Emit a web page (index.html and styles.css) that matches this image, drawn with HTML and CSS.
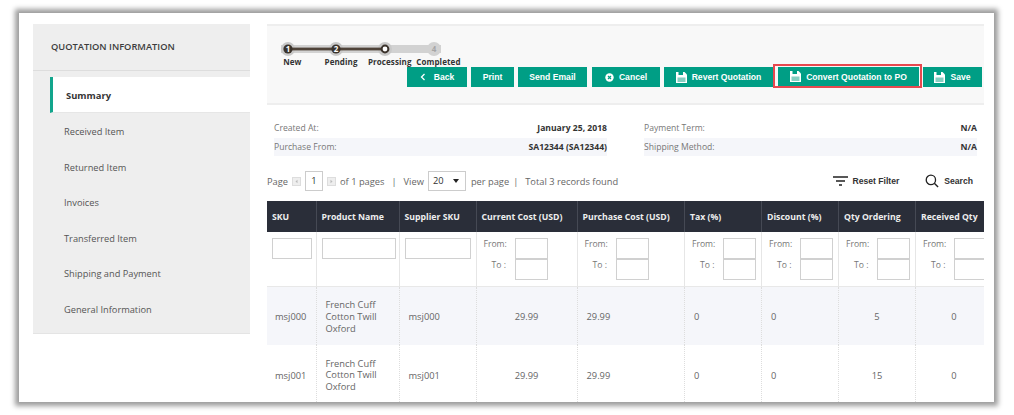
FILE: index.html
```html
<!DOCTYPE html>
<html lang="en">
<head>
<meta charset="utf-8">
<title>Quotation Information</title>
<link rel="stylesheet" href="styles.css">
</head>
<body>
<div class="shot">
  <aside class="side">
    <h2 class="side-title">QUOTATION INFORMATION</h2>
    <ul class="side-nav">
      <li class="active">Summary</li>
      <li>Received Item</li>
      <li>Returned Item</li>
      <li>Invoices</li>
      <li>Transferred Item</li>
      <li>Shipping and Payment</li>
      <li>General Information</li>
    </ul>
  </aside>
  <main class="main">
    <section class="toolbar">
      <svg class="track" width="170" height="18" viewBox="0 0 170 18">
        <rect x="7" y="5" width="160" height="8" fill="#d2d2d2"/>
        <circle cx="14" cy="9" r="7" fill="#c8c8c8"/><circle cx="62" cy="9" r="7" fill="#c8c8c8"/><circle cx="111" cy="9" r="7" fill="#c8c8c8"/><circle cx="160" cy="9" r="7" fill="#d2d2d2"/>
        <rect x="14" y="7.6" width="97" height="2.8" fill="#4f4339"/>
        <circle cx="14" cy="9" r="4.6" fill="#3b332c"/><circle cx="62" cy="9" r="4.6" fill="#3b332c"/><circle cx="111" cy="9" r="3.4" fill="#fff" stroke="#3b332c" stroke-width="2"/>
        <text x="14" y="12" class="num">1</text><text x="62" y="12" class="num">2</text><text x="160" y="12" class="num off">4</text>
      </svg>
      <div class="step-labels"><span>New</span><span>Pending</span><span>Processing</span><span>Completed</span></div>
      <div class="actions">
        <button class="btn wide-back"><svg width="6" height="8" viewBox="0 0 6 8"><path d="M4.5 1 1.5 4l3 3" fill="none" stroke="#fff" stroke-width="1.3"/></svg>Back</button>
        <button class="btn w-print">Print</button>
        <button class="btn w-mail">Send Email</button>
        <button class="btn w-cancel"><svg width="9" height="9" viewBox="0 0 9 9"><circle cx="4.5" cy="4.5" r="4.2" fill="#fff"/><path d="M3 3l3 3M6 3 3 6" stroke="#009e85" stroke-width="1.2"/></svg>Cancel</button>
        <button class="btn w-revert"><svg class="floppy" width="11" height="11" viewBox="0 0 11 11"><path d="M0 0h8.5L11 2.5V11H0z" fill="#fff"/><rect x="2.5" y="0" width="4.5" height="3" fill="#009e85"/><rect x="1.5" y="5.5" width="8" height="4.5" fill="#86cfc2"/></svg>Revert Quotation</button>
        <span class="mark"><button class="btn w-convert"><svg class="floppy" width="11" height="11" viewBox="0 0 11 11"><path d="M0 0h8.5L11 2.5V11H0z" fill="#fff"/><rect x="2.5" y="0" width="4.5" height="3" fill="#009e85"/><rect x="1.5" y="5.5" width="8" height="4.5" fill="#86cfc2"/></svg>Convert Quotation to PO</button></span>
        <button class="btn w-save"><svg class="floppy" width="11" height="11" viewBox="0 0 11 11"><path d="M0 0h8.5L11 2.5V11H0z" fill="#fff"/><rect x="2.5" y="0" width="4.5" height="3" fill="#009e85"/><rect x="1.5" y="5.5" width="8" height="4.5" fill="#86cfc2"/></svg>Save</button>
      </div>
    </section>
    <section class="info">
      <dl class="info-col">
        <div class="info-row"><dt>Created At:</dt><dd>January 25, 2018</dd></div>
        <div class="info-row alt"><dt>Purchase From:</dt><dd>SA12344 (SA12344)</dd></div>
      </dl>
      <dl class="info-col">
        <div class="info-row"><dt>Payment Term:</dt><dd>N/A</dd></div>
        <div class="info-row alt"><dt>Shipping Method:</dt><dd>N/A</dd></div>
      </dl>
    </section>
    <section class="pager">
      <span>Page</span>
      <svg class="nudge" width="9" height="9" viewBox="0 0 9 9"><rect x=".5" y=".5" width="8" height="8" fill="#eee" stroke="#ddd"/><path d="M5.5 2.8 3.5 4.5l2 1.7z" fill="#bbb"/></svg>
      <span class="page-box">1</span>
      <svg class="nudge" width="9" height="9" viewBox="0 0 9 9"><rect x=".5" y=".5" width="8" height="8" fill="#eee" stroke="#ddd"/><path d="M3.5 2.8l2 1.7-2 1.7z" fill="#bbb"/></svg>
      <span>of 1 pages</span><span class="sep">|</span><span>View</span>
      <span class="view-box">20<i class="caret"></i></span>
      <span>per page</span><span class="sep2">|</span><span class="total">Total 3 records found</span>
      <span class="tools">
        <span class="tool reset"><svg width="15" height="10" viewBox="0 0 15 10"><path d="M0 1h15M3 5h9M6 9h3" stroke="#222" stroke-width="1.6"/></svg>Reset Filter</span>
        <span class="tool"><svg width="14" height="14" viewBox="0 0 15 15"><circle cx="6.3" cy="6.3" r="5" fill="none" stroke="#222" stroke-width="1.4"/><path d="m10 10 4 4" stroke="#222" stroke-width="1.5"/></svg>Search</span>
      </span>
    </section>
    <div class="grid-wrap">
      <table class="grid">
        <colgroup>
          <col class="c1"><col class="c2"><col class="c3"><col class="c4"><col class="c5"><col class="c6"><col class="c6"><col class="c6"><col class="c6">
        </colgroup>
        <thead>
          <tr><th>SKU</th><th>Product Name</th><th>Supplier SKU</th><th>Current Cost (USD)</th><th>Purchase Cost (USD)</th><th>Tax (%)</th><th>Discount (%)</th><th>Qty Ordering</th><th>Received Qty</th></tr>
        </thead>
        <tbody>
          <tr class="filters">
            <td><input class="f f1"></td><td><input class="f f2"></td><td><input class="f f3"></td>
            <td><div class="range"><label>From:</label><input class="f n"><label class="to">To :</label><input class="f n"></div></td>
            <td><div class="range"><label>From:</label><input class="f n"><label class="to">To :</label><input class="f n"></div></td>
            <td><div class="range"><label>From:</label><input class="f n"><label class="to">To :</label><input class="f n"></div></td>
            <td><div class="range"><label>From:</label><input class="f n"><label class="to">To :</label><input class="f n"></div></td>
            <td><div class="range"><label>From:</label><input class="f n"><label class="to">To :</label><input class="f n"></div></td>
            <td><div class="range"><label>From:</label><input class="f n"><label class="to">To :</label><input class="f n"></div></td>
          </tr>
          <tr class="data shade"><td>msj000</td><td class="name">French Cuff Cotton Twill Oxford</td><td>msj000</td><td class="ctr">29.99</td><td>29.99</td><td>0</td><td>0</td><td class="ctr">5</td><td class="ctr">0</td></tr>
          <tr class="data"><td>msj001</td><td class="name">French Cuff Cotton Twill Oxford</td><td>msj001</td><td class="ctr">29.99</td><td>29.99</td><td>0</td><td>0</td><td class="ctr">15</td><td class="ctr">0</td></tr>
        </tbody>
      </table>
    </div>
  </main>
</div>
</body>
</html>
```
FILE: styles.css
```css
* { box-sizing: border-box; }
html, body { margin: 0; height: 100%; background: #fff; overflow: hidden; }
body { padding: 13px 0 0 19px; font-family: "Open Sans", sans-serif; font-size: 9.3px; color: #555; }
.shot {
  width: 975px; height: 389px; background: #fff; overflow: hidden;
  display: flex; align-items: flex-start; gap: 17px; padding: 11px 0 0 14px;
  box-shadow: 0 0 5px 4px #9c9c9c;
}
.side { width: 217px; flex: none; background: #eee; border-bottom: 1px solid #e4e4e4; padding-bottom: 7px; }
.side-title { margin: 0; height: 47px; line-height: 46px; padding-left: 18px; font-size: 9.3px; font-weight: 600; color: #3c3c3c; border-bottom: 1px solid #ddd; }
.side-nav { list-style: none; margin: 6px 0 0 17px; padding: 0; }
.side-nav li { height: 35.5px; line-height: 37px; padding-left: 14px; font-size: 9.25px; color: #555; }
.side-nav li.active { height: 36px; line-height: 38px; background: #fff; border-left: 3px solid #12a58c; padding-left: 13px; font-size: 9.4px; font-weight: 700; color: #333; border-bottom: 1px solid #e6e6e6; }
.main { width: 717px; flex: none; }
.toolbar { height: 81px; background: #f8f8f8; border-top: 2px solid #eeeeee; border-bottom: 2px solid #eeeeee; padding-top: 14px; }
.track { display: block; margin-left: 7px; }
.num { font: 700 8px "Open Sans", sans-serif; fill: #fff; text-anchor: middle; }
.num.off { fill: #a5a5a5; }
.step-labels { display: flex; margin-left: 1px; height: 12px; line-height: 12px; margin-top: -2px; }
.step-labels span { width: 48.7px; flex: none; font-size: 8px; font-weight: 700; color: #333; white-space: nowrap; letter-spacing: .1px; display: flex; justify-content: center; }
.actions { display: flex; justify-content: flex-end; align-items: flex-end; padding-right: 2px; margin-top: -5px; height: 24px; }
.btn {
  height: 20px; border: 0; padding: 0; background: #009e85; color: #fff; flex: none;
  font: 700 8.6px "Liberation Sans", sans-serif; display: flex; align-items: center; justify-content: center; gap: 5px;
  margin-left: 4px;
}
.wide-back { width: 60px; gap: 8px; margin-left: 0; }
.w-print { width: 43px; }
.w-mail { width: 69px; }
.w-cancel { width: 68px; margin-left: 5px; }
.w-revert { width: 109px; }
.w-convert { width: 141px; margin-left: 0; }
.w-save { width: 59px; margin-left: 1px; }
.mark { display: flex; align-items: flex-end; flex: none; width: 149px; height: 24px; padding: 0 1px 0 3px; border: 2px solid #e8484f; margin-bottom: -1px; }
.mark .btn { height: 19px; }
.info { display: flex; gap: 37px; padding: 14px 7px 0; }
.info-col { margin: 0; width: 333px; }
.info-row { display: flex; justify-content: space-between; align-items: center; height: 18.5px; }
.info-row.alt { background: #f5f6fa; }
.info-row dt { color: #777; font-size: 8.6px; }
.info-row dd { margin: 0; font-weight: 700; color: #333; font-size: 8.6px; }
.pager { display: flex; align-items: center; height: 26px; margin-top: 12px; color: #666; font-size: 9.3px; }
.nudge { margin: 0 4px; flex: none; }
.page-box { width: 18px; height: 20px; border: 1px solid #ccc; text-align: center; line-height: 18px; color: #333; background: #fff; }
.sep { margin: 0 7px; }
.sep2 { margin: 0 7px 0 4px; }
.view-box { width: 38px; height: 20px; border: 1px solid #ccc; margin: 0 5px 0 4px; padding-left: 4px; line-height: 18px; color: #333; position: relative; background: #fff; }
.caret { position: absolute; right: 6px; top: 7px; border: 3px solid transparent; border-top: 4px solid #222; border-bottom: 0; }
.tools { margin-left: auto; display: flex; align-items: center; gap: 26px; padding-right: 11px; font: 700 8.6px "Liberation Sans", sans-serif; color: #333; }
.tool { display: flex; align-items: center; gap: 5px; }
.grid-wrap { margin-top: 7px; width: 717px; overflow: hidden; }
.grid { border-collapse: separate; border-spacing: 0; table-layout: fixed; width: 725px; }
.c1 { width: 48.5px; } .c2 { width: 83px; } .c3 { width: 77px; } .c4 { width: 101px; } .c5 { width: 107.5px; } .c6 { width: 77px; }
.grid th { background: #2a2e39; color: #eee; height: 31px; text-align: left; padding: 0 0 0 5px; font-size: 8.7px; font-weight: 700; border-left: 1px solid #454954; white-space: nowrap; }
.grid th:first-child { border-left: 0; }
.filters td { height: 55px; padding: 6px 0 0 5px; vertical-align: top; border-left: 1px solid #e6e6e6; border-bottom: 1px solid #e8e8e8; }
.filters td:first-child { border-left: 0; }
.f { display: block; height: 21px; border: 1px solid #d0d0d0; background: #fff; padding: 0; margin: 0; }
.f1 { width: 40px; } .f2 { width: 74px; } .f3 { width: 66px; }
.range { display: grid; grid-template-columns: 31px 33px; justify-content: start; color: #777; font-size: 8.6px; padding-left: 2px; }
.range label { line-height: 12px; }
.range .to { padding-left: 8px; }
.data td { height: 58.4px; padding: 1px 0 0 9px; border-left: 1px dotted #ddd; color: #666; font-size: 9.3px; }
.data td:first-child { border-left: 0; padding-left: 8px; }
.data .name { padding: 1px 8px 0 9px; line-height: 11.7px; }
.data .ctr { text-align: center; padding-left: 0; }
.shade td { background: #f5f6fa; }
```
